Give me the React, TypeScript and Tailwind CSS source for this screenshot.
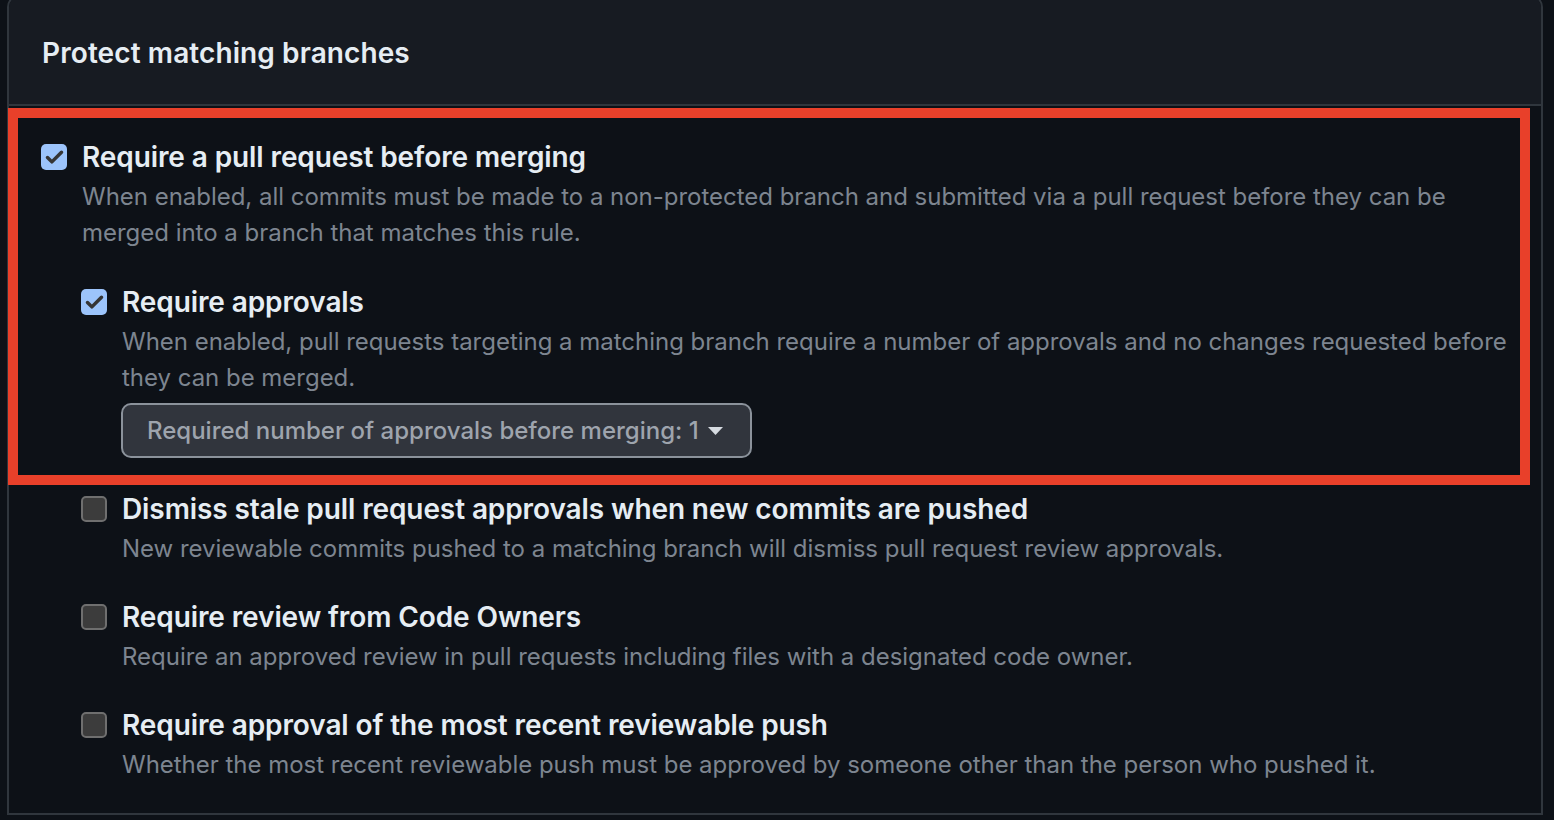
import { Check } from 'lucide-react'

interface RuleItem {
  label: string
  description: string
  checked: boolean
}

const nestedRules: RuleItem[] = [
  {
    label: 'Dismiss stale pull request approvals when new commits are pushed',
    description: 'New reviewable commits pushed to a matching branch will dismiss pull request review approvals.',
    checked: false,
  },
  {
    label: 'Require review from Code Owners',
    description: 'Require an approved review in pull requests including files with a designated code owner.',
    checked: false,
  },
  {
    label: 'Require approval of the most recent reviewable push',
    description: 'Whether the most recent reviewable push must be approved by someone other than the person who pushed it.',
    checked: false,
  },
]

function Checkbox({ checked }: { checked: boolean }) {
  if (checked) {
    return (
      <div className="w-[26px] h-[26px] shrink-0 rounded-[5px] bg-[#9cc4fb] flex items-center justify-center">
        <Check className="w-[21px] h-[21px] text-[#353535]" strokeWidth={4} />
      </div>
    )
  }
  return <div className="w-[26px] h-[26px] shrink-0 rounded-[5px] bg-[#3c3c3c] border-2 border-[#6f6f6f]" />
}

function Rule({ item, children }: { item: RuleItem; children?: React.ReactNode }) {
  return (
    <div className="flex gap-[15px]">
      <div className="h-[36px] flex items-center">
        <Checkbox checked={item.checked} />
      </div>
      <div className="flex-1 min-w-0">
        <div className="h-[36px] leading-[36px] text-[28px] font-semibold text-[#e6edf3] tracking-[-0.1px] whitespace-nowrap">
          {item.label}
        </div>
        <p className="mt-1 text-[24px] leading-[36px] text-[#7d8590] tracking-[-0.02px]">
          {item.description}
        </p>
        {children}
      </div>
    </div>
  )
}

export default function App() {
  return (
    <div
      className="w-[1554px] h-[820px] overflow-hidden bg-[#0d1117]"
      style={{ fontFamily: 'Inter, "Noto Sans", sans-serif' }}
    >
      <div className="relative ml-[7px] w-[1536px] -mt-[5px] rounded-t-[12px] border-2 border-[#30363d] bg-[#0d1117]">
        {/* header */}
        <div className="h-[109px] pt-[5px] pl-[33px] flex items-center bg-[#171b22] border-b-2 border-[#30363d] rounded-t-[10px]">
          <h2 className="text-[28px] font-semibold text-[#e6edf3] tracking-[0.1px]">
            Protect matching branches
          </h2>
        </div>

        <div className="pl-[32px] pr-[18px] pt-[33px] pb-[30px]">
          <Rule
            item={{
              label: 'Require a pull request before merging',
              description:
                'When enabled, all commits must be made to a non-protected branch and submitted via a pull request before they can be merged into a branch that matches this rule.',
              checked: true,
            }}
          >
            <div className="mt-[33px] -ml-[1px]">
              <Rule
                item={{
                  label: 'Require approvals',
                  description:
                    'When enabled, pull requests targeting a matching branch require a number of approvals and no changes requested before they can be merged.',
                  checked: true,
                }}
              >
                <button className="mt-[7px] h-[55px] w-[631px] -ml-[1px] rounded-[10px] border-2 border-[#8b929b] bg-[#31353d] flex items-center pl-[24px] gap-[9px] text-[24px] font-medium text-[#9ea4ad]">
                  <span>Required number of approvals before merging: 1</span>
                  <svg width="15" height="8" viewBox="0 0 15 8">
                    <path d="M0 0 L15 0 L7.5 8 Z" fill="#d6dbe1" />
                  </svg>
                </button>
              </Rule>

              <div className="mt-[33px] flex flex-col gap-[32px]">
                {nestedRules.map((r) => (
                  <Rule key={r.label} item={r} />
                ))}
              </div>
            </div>
          </Rule>
        </div>

        {/* annotation */}
        <div className="absolute left-[-1px] top-[111px] w-[1522px] h-[377px] border-[10px] border-[#e8402a] pointer-events-none" />
      </div>
    </div>
  )
}
